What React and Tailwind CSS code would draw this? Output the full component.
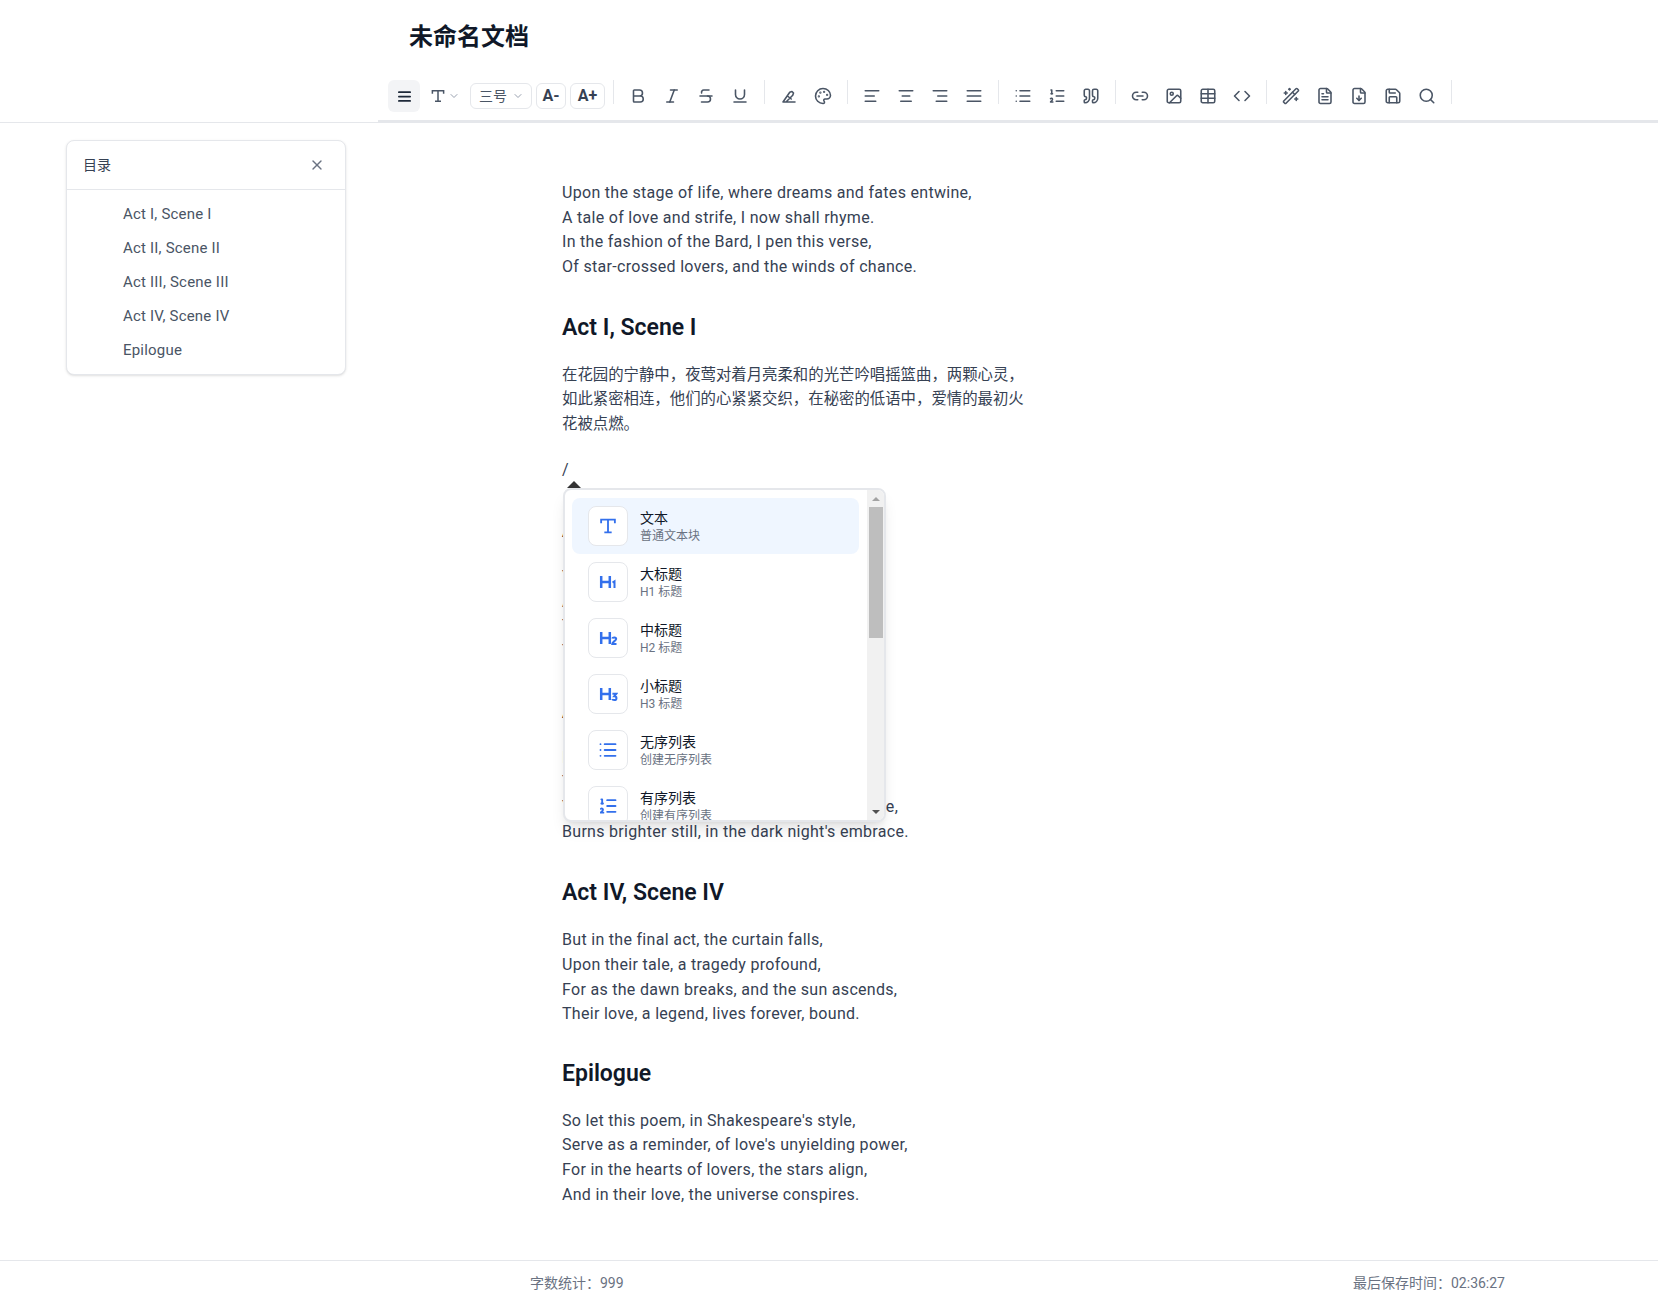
import React from "react";
import {
  AlignJustify, ChevronDown, Bold, Italic, Strikethrough, Underline, Palette,
  AlignLeft, AlignCenter, AlignRight, List, ListOrdered, Quote,
  Link2, Image as ImageIcon, Table, Code, WandSparkles, FileText, FileDown, Save, Search, X,
} from "lucide-react";

const FONT = "font-['Roboto','Noto_Sans_CJK_SC',sans-serif]";

function SerifT({ size = 18, className = "" }) {
  return (
    <svg width={size} height={size} viewBox="0 0 24 24" fill="currentColor" className={className}>
      <path d="M3.500 4h17v5h-2V6H13v12h3v2H8v-2h3V6H5.500v3h-2z" />
    </svg>
  );
}

function Marker({ size = 18, strokeWidth = 2.1 }) {
  return (
    <svg width={size} height={size} viewBox="0 0 24 24" fill="none" stroke="currentColor" strokeWidth={strokeWidth} strokeLinecap="round" strokeLinejoin="round">
      <path d="M4 20h16M4 20l9-13 3-1 2 2-1 3-9 9M10 12l5 4" />
    </svg>
  );
}

function HeadingIcon({ digit }) {
  const d = {
    1: "M14.500 10.500l2-1.200V16",
    2: "M14.200 10.500c.5-1.500 4-1.500 4 .5 0 1.500-4 3-4 5h4.300",
    3: "M14.400 9.800h3.800l-2 2.500c3 0 3 3.700 0 3.700-1 0-1.800-.3-2-1",
  }[digit];
  return (
    <svg width="20" height="20" viewBox="0 0 20 20" fill="none" stroke="currentColor">
      <path d="M3.200 4v12M11.800 4v12M3.200 10h8.600" strokeWidth="2.500" />
      <path d={d} strokeWidth="2" />
    </svg>
  );
}

function Sep() {
  return <div className="w-px h-6 bg-gray-200 mx-2 self-start" />;
}

function Btn({ icon: Icon }) {
  return (
    <button className="w-8 h-8 flex items-center justify-center text-gray-600 rounded-md">
      <Icon size={18} strokeWidth={2.1} />
    </button>
  );
}

function Group({ items }) {
  return (
    <div className="flex gap-0.5">
      {items.map((I, i) => <Btn key={i} icon={I} />)}
    </div>
  );
}

function Toolbar() {
  return (
    <div className="ml-[378px] h-[42px] flex items-start pl-2.5 border-b-2 border-gray-200">
      <button className="w-8 h-8 flex items-center justify-center bg-gray-100 rounded-md text-gray-800">
        <AlignJustify size={15} strokeWidth={2.8} />
      </button>
      <div className="ml-1 w-[42px] h-8 flex items-center pl-[5px] text-gray-600">
        <SerifT size={18} />
        <ChevronDown size={12} className="ml-px text-gray-400" />
      </div>
      <div className="ml-1 mt-[3px] w-[62px] h-[26px] flex items-center border border-gray-200 rounded-md pl-2 text-sm text-gray-600">
        <span>三号</span>
        <ChevronDown size={12} className="ml-[5px] text-gray-400" />
      </div>
      <div className="ml-1 mt-[3px] w-[30px] h-[26px] flex items-center justify-center border border-gray-200 rounded-md text-base leading-none font-bold text-gray-700">A-</div>
      <div className="ml-1 mt-[3px] w-[35px] h-[26px] flex items-center justify-center border border-gray-200 rounded-md text-base leading-none font-bold text-gray-700">A+</div>
      <Sep />
      <Group items={[Bold, Italic, Strikethrough, Underline]} />
      <Sep />
      <Group items={[Marker, Palette]} />
      <Sep />
      <Group items={[AlignLeft, AlignCenter, AlignRight, AlignJustify]} />
      <Sep />
      <Group items={[List, ListOrdered, Quote]} />
      <Sep />
      <Group items={[Link2, ImageIcon, Table, Code]} />
      <Sep />
      <Group items={[WandSparkles, FileText, FileDown, Save, Search]} />
      <Sep />
    </div>
  );
}

function Toc() {
  const items = ["Act I, Scene I", "Act II, Scene II", "Act III, Scene III", "Act IV, Scene IV", "Epilogue"];
  return (
    <div className="w-[280px] border border-gray-200 rounded-lg shadow-sm bg-white">
      <div className="h-[49px] flex items-center justify-between pl-4 pr-5 border-b border-gray-200 text-sm text-gray-700">
        <span>目录</span>
        <X size={16} className="text-gray-500" />
      </div>
      <div className="py-[7px] pl-14">
        {items.map((t) => (
          <div key={t} className="h-[34px] flex items-center text-[15px] tracking-[0.2px] text-gray-600">{t}</div>
        ))}
      </div>
    </div>
  );
}

function Item({ icon, title, sub, active }) {
  return (
    <div className={"shrink-0 h-14 flex items-center gap-3 px-4 rounded-lg " + (active ? "bg-blue-50" : "bg-white")}>
      <div className="w-10 h-10 shrink-0 flex items-center justify-center bg-white border border-gray-200 rounded-lg text-[#3370ec]">
        {icon}
      </div>
      <div>
        <div className="text-sm leading-5 text-gray-900">{title}</div>
        <div className="text-xs leading-4 text-gray-500">{sub}</div>
      </div>
    </div>
  );
}

function SlashMenu() {
  return (
    <div className="absolute left-px top-[30px] z-10">
      <div className="absolute left-[4px] -top-[7px] w-0 h-0 border-x-[7px] border-x-transparent border-b-[7px] border-b-[#333333]" />
      <div className="w-[323px] h-[334px] flex bg-white border-2 border-gray-200 rounded-lg shadow-lg overflow-hidden">
        <div className="flex-1 flex flex-col pl-[7px] pr-2 pt-2 overflow-hidden">
          <Item active icon={<SerifT size={22} />} title="文本" sub="普通文本块" />
          <Item icon={<HeadingIcon digit={1} />} title="大标题" sub="H1 标题" />
          <Item icon={<HeadingIcon digit={2} />} title="中标题" sub="H2 标题" />
          <Item icon={<HeadingIcon digit={3} />} title="小标题" sub="H3 标题" />
          <Item icon={<List size={20} strokeWidth={2.2} />} title="无序列表" sub="创建无序列表" />
          <Item icon={<ListOrdered size={20} strokeWidth={2.2} />} title="有序列表" sub="创建有序列表" />
        </div>
        <div className="w-[17px] shrink-0 bg-[#f1f1f1] flex flex-col items-center">
          <div className="h-[17px] flex items-center justify-center">
            <div className="w-0 h-0 border-x-[4px] border-x-transparent border-b-[4px] border-b-[#a3a3a3]" />
          </div>
          <div className="w-[14px] h-[131px] bg-[#bebebe]" />
          <div className="flex-1" />
          <div className="h-[17px] flex items-center justify-center">
            <div className="w-0 h-0 border-x-[4px] border-x-transparent border-t-[4px] border-t-[#505050]" />
          </div>
        </div>
      </div>
    </div>
  );
}

function Para({ lines, className = "text-[16px] tracking-[0.3px]" }) {
  return (
    <p className={"leading-[24.64px] text-gray-700 " + className}>
      {lines.map((l, i) => (
        <React.Fragment key={i}>{l}{i < lines.length - 1 && <br />}</React.Fragment>
      ))}
    </p>
  );
}

function H({ children, className = "mt-[28px] mb-[16px]" }) {
  return <h3 className={"text-[23px] leading-[38px] font-semibold text-gray-900 " + className}>{children}</h3>;
}

export default function App() {
  return (
    <div className={FONT + " h-[1305px] flex flex-col bg-white overflow-hidden"}>
      <header className="h-[123px] shrink-0 flex flex-col border-b border-gray-200">
        <h1 className="pl-[409px] h-[80px] pt-[19px] text-2xl leading-9 font-bold text-gray-900">未命名文档</h1>
        <Toolbar />
      </header>
      <div className="flex-1 flex min-h-0">
        <aside className="w-[562px] shrink-0 pl-[66px] pt-[17px]">
          <Toc />
        </aside>
        <main className="pt-[58px]">
          <Para lines={["Upon the stage of life, where dreams and fates entwine,", "A tale of love and strife, I now shall rhyme.", "In the fashion of the Bard, I pen this verse,", "Of star-crossed lovers, and the winds of chance."]} />
          <H className="mt-[29px] mb-[16px]">Act I, Scene I</H>
          <Para className="text-[15.4px]" lines={["在花园的宁静中，夜莺对着月亮柔和的光芒吟唱摇篮曲，两颗心灵，", "如此紧密相连，他们的心紧紧交织，在秘密的低语中，爱情的最初火", "花被点燃。"]} />
          <div className="relative mt-[22px]">
            <Para lines={["/"]} />
            <SlashMenu />
          </div>
          <H>Act II, Scene II</H>
          <Para lines={["Yet fate, a cruel master, does intervene,", "And families' feuds, their love does sever,", "Through whispered vows, a secret is seen,", "Their hearts entwined, and bound forever."]} />
          <H>Act III, Scene III</H>
          <Para lines={["In shadows deep, they steal away,", "To meet beneath the silver moon,", "Yet love, a bright flame that none can replace,", "Burns brighter still, in the dark night's embrace."]} />
          <H className="mt-[30px] mb-[16px]">Act IV, Scene IV</H>
          <Para lines={["But in the final act, the curtain falls,", "Upon their tale, a tragedy profound,", "For as the dawn breaks, and the sun ascends,", "Their love, a legend, lives forever, bound."]} />
          <H>Epilogue</H>
          <Para lines={["So let this poem, in Shakespeare's style,", "Serve as a reminder, of love's unyielding power,", "For in the hearts of lovers, the stars align,", "And in their love, the universe conspires."]} />
        </main>
      </div>
      <footer className="h-[45px] shrink-0 border-t border-gray-200 flex items-center justify-between pl-[530px] pr-[153px] text-sm text-gray-500">
        <span>字数统计：999</span>
        <span>最后保存时间：02:36:27</span>
      </footer>
    </div>
  );
}
